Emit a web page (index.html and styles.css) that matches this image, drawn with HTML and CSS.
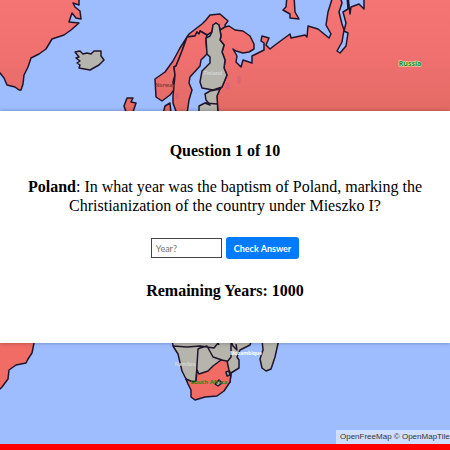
FILE: index.html
```
<!DOCTYPE html>
<html lang="en">
<head>
  <meta charset="utf-8">
  <meta name="viewport" content="width=device-width, initial-scale=1">
  <title>History Map Quiz</title>
  <link rel="stylesheet" href="styles.css">
</head>
<body>
  <main class="map">
    <svg class="world" viewBox="0 0 450 444" preserveAspectRatio="xMidYMid slice" role="img" aria-label="World map">
      <defs>
        <linearGradient id="land" gradientUnits="userSpaceOnUse" x1="0" y1="0" x2="0" y2="111">
          <stop offset="0" stop-color="#f57474"/>
          <stop offset="0.5" stop-color="#f07070"/>
          <stop offset="1" stop-color="#e36b64"/>
        </linearGradient>
      </defs>
      <!-- countries still in play -->
      <g class="active">
        <path d="M-4 -4H79L79 5L73 3L75 7L80 11L81 19L76 18L72 13L69 22L79 23L71 30L64 35L52 39L46 49L39 54L31 58L28 67L24 75L23 84L21 90L19 90L15 87L7 85L4 78L-4 68Z"/>
        <path d="M127 98L133 98L131 102L136 103L133 112H126L124 106Z"/>
        <path d="M155 79L165 72L173 61L180 48L189 34L202 24L206 20L210 15L220 14L228 21L225 25L226 29L220 30L219 25L216 23L213 25L212 32L207 35L200 31L199 34L197 32L195 36L187 37L182 51L176 66L174 67L175 75L173 82L174 90L170 95L162 101L156 97Z"/>
        <path d="M207 35L206 40L207 54L201 60L200 66L190 77L189 83L192 90L189 100L187 114H177L173 103L173 96L175 75L174 67L176 66L182 51L187 37L195 36L197 32L199 34L200 31Z"/>
        <path d="M163 114L165 106L170 103L171 114Z"/>
        <path d="M220 30L225 27L229 26L235 30L243 31L250 36L254 44L254 49L249 52L243 53L236 51L233 49L237 56L236 62L241 67L243 60L252 63L252 56L256 54L264 50L264 43L261 41L262 36L269 38L266 45L270 49L275 45L290 34L291 38L305 35L307 37L308 26L318 29L329 38L331 34L326 25L328 12L333 -4H340L342 3L339 12L342 24L344 30L342 42L337 51L340 53L346 46L348 33L344 31L346 23L343 12L348 9L347 -4H348L350 14L351 7L359 4L364 9L364 -4H454V118H218L217 96L219 90L222 87L227 75L224 68L225 60L222 52L224 45L220 40L221 36Z"/>
        <path d="M287 -4L286 7L283 10L290 14L290 18L299 19L295 12L294 -4Z"/>
      </g>
      <g class="cities">
        <ellipse cx="228" cy="86" rx="2" ry="4"/>
        <ellipse cx="239" cy="80" rx="2" ry="4"/>
        <ellipse cx="177" cy="96" rx="2" ry="3"/>
      </g>
      <g class="active south">
        <path d="M-4 339H34L34 343L32 353L28 359L26 363L16 365L9 370L8 379L2 387L-4 393Z"/>
      </g>
      <!-- countries out of play -->
      <g class="inactive">
        <path d="M75 52L80 51L83 54L87 53L91 54L94 51L101 51L101 56L104 60L99 65L90 70L79 68L80 65L77 63L80 61L76 58L79 57Z"/>
        <path d="M206 38L210 36L212 32L213 25L216 23L219 25L221 36L220 40L224 45L222 52L225 60L224 68L227 75L222 87L213 90L202 88L200 82L202 71L210 63L210 57L207 54Z"/>
        <path d="M205 94L210 91L220 89L217 96L218 114H199L199 106L205 103L210 105L206 100Z"/>
        <path d="M205 103L217 104"/>
        <path d="M172 339L173 346L178 354L182 371L187 381L196 389L230 382L231 373L239 368L239 360L237 357L240 350L250 345L252 339Z"/>
        <path d="M173 346L187 347L200 346L214 348L218 343M200 348L198 349L196 381M200 348L207 346L213 357L222 360M217 341L219 345M231 341L231 357L227 362M231 341L233 346L237 350L236 344"/>
        <path d="M262 339L263 350L260 359L262 368L266 371L271 369L275 357L279 339Z"/>
      </g>
      <g class="active south">
        <path d="M186 379L193 382L196 381L197 370L199 374L208 371L213 366L221 360L227 361L229 370L231 374L230 382L224 391L217 396L205 397L195 400L191 397L191 390L188 384Z"/>
        <path class="inactive" d="M215 384L219 380L222 383L218 386Z"/>
        <path class="inactive" d="M226 372L229 371L230 375L227 376Z"/>
      </g>
      <g class="label">
        <text x="410" y="66">Russia</text>
        <text class="faint" x="209" y="384">South Africa</text>
        <text class="dim" x="165" y="87">Norway</text>
        <text class="light" x="213" y="75">Finland</text>
        <text class="light" x="185" y="366">Namibia</text>
        <text class="light sea" x="246" y="355">Mozambique</text>
      </g>
    </svg>

    <form class="question-box">
      <h3 class="heading">Question 1 of 10</h3>
      <p class="question"><label for="yearIn"><b>Poland</b>: In what year was the baptism of Poland, marking the Christianization of the country under Mieszko I?</label></p>
      <div class="answer">
        <input class="year" type="text" id="yearIn" placeholder="Year?">
        <button class="check" type="button" id="checkAnswer">Check Answer</button>
      </div>
      <h3 class="heading">Remaining Years: 1000</h3>
    </form>

    <div class="attribution"><a href="#">OpenFreeMap</a> <a href="#">© OpenMapTiles</a></div>
  </main>
  <footer class="bar"></footer>
</body>
</html>
```
FILE: styles.css
```
body {
  margin: 0;
  min-height: 100vh;
  display: flex;
  flex-direction: column;
  font-family: "Liberation Serif", "Times New Roman", serif;
  font-size: 16px;
}

.map {
  position: relative;
  flex: 1;
  display: grid;
  align-items: center;
  overflow: hidden;
  background-color: #9ebdff;
}

/* map fills the area behind the question */
.world {
  position: absolute;
  width: 100%;
  height: 100%;
}
.world path {
  stroke: #20152b;
  stroke-width: 1.5;
  stroke-linejoin: round;
}
.active {fill: url(#land);}
.south {fill: #f06c65;}
.inactive {fill: #b5b5ad;}
.cities {
  fill: #c85a90;
  opacity: 0.4;
}

.label {
  font: bold 7px "Noto Sans", sans-serif;
  text-anchor: middle;
  fill: #248a24;
  stroke: #e4e8b0;
  stroke-width: 1;
  paint-order: stroke;
}
.faint {
  stroke: none;
  font-size: 6px;
}
.dim {
  fill: #8c3f3c;
  stroke: none;
  font-size: 5px;
}
.light {
  fill: #d4d4d4;
  stroke: none;
  font-size: 5px;
}
.sea {fill: white;}

.question-box {
  position: relative;
  margin-top: 10px;
  padding: 30px 20px 42px;
  background-color: white;
  box-shadow: 0 0 4px rgba(0, 0, 0, 0.3);
  text-align: center;
}
.heading {
  margin: 0;
  font-size: 16px;
  line-height: 20px;
}
.question {
  margin: 16px 0 22px;
  line-height: 19px;
}

.answer {
  display: flex;
  justify-content: center;
  align-items: center;
  gap: 4px;
  margin-bottom: 22px;
}
.year {
  box-sizing: border-box;
  width: 71px;
  height: 20px;
  padding: 0 4px;
  border: 1px solid #444;
  font: 9px Lato, sans-serif;
}
.year::placeholder {color: #757575;}
.check {
  height: 22px;
  padding: 0 8px;
  border: none;
  border-radius: 3px;
  background-color: #007bff;
  color: white;
  font: bold 9px Lato, sans-serif;
  cursor: pointer;
}

/* map credits, cut off by the edge of the window */
.attribution {
  position: absolute;
  left: calc(100% - 114px);
  bottom: 0;
  padding: 0 4px;
  background-color: rgba(255, 255, 255, 0.5);
  font: 8px/14px "Liberation Sans", Arial, sans-serif;
  white-space: nowrap;
}
.attribution a {
  color: #333;
  text-decoration: none;
}

.bar {
  height: 6px;
  background-color: red;
}
```
